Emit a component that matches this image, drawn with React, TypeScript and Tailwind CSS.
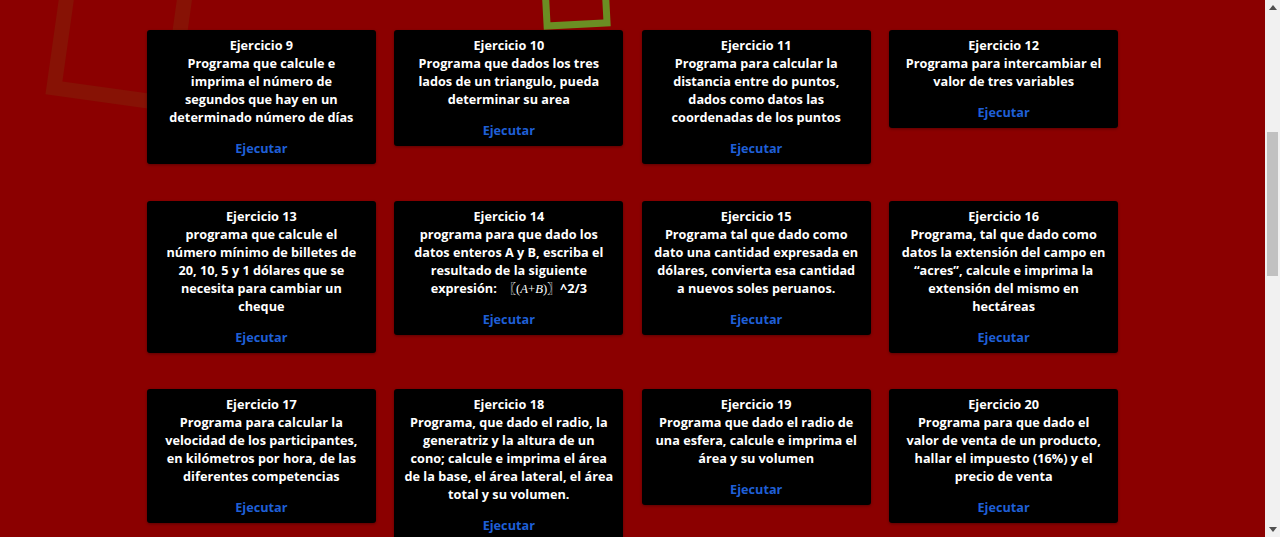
import React from "react";

type Card = { n: number; lines: React.ReactNode[] };

const Expr = () => (
  <span>
    expresión:{"\u00A0\u00A0"}
    <span style={{ fontFamily: '"Noto Sans CJK SC", sans-serif' }} className="font-bold">〖</span>
    <span className="font-normal" style={{ fontFamily: '"Liberation Serif", serif' }}>
      (<i>A</i>+<i>B</i>)
    </span>
    <span style={{ fontFamily: '"Noto Sans CJK SC", sans-serif' }} className="font-bold">〗</span>^2/3
  </span>
);

const cards: Card[] = [
  { n: 9, lines: ["Programa que calcule e", "imprima el número de", "segundos que hay en un", "determinado número de días"] },
  { n: 10, lines: ["Programa que dados los tres", "lados de un triangulo, pueda", "determinar su area"] },
  { n: 11, lines: ["Programa para calcular la", "distancia entre do puntos,", "dados como datos las", "coordenadas de los puntos"] },
  { n: 12, lines: ["Programa para intercambiar el", "valor de tres variables"] },
  { n: 13, lines: ["programa que calcule el", "número mínimo de billetes de", "20, 10, 5 y 1 dólares que se", "necesita para cambiar un", "cheque"] },
  { n: 14, lines: ["programa para que dado los", "datos enteros A y B, escriba el", "resultado de la siguiente", <Expr key="e" />] },
  { n: 15, lines: ["Programa tal que dado como", "dato una cantidad expresada en", "dólares, convierta esa cantidad", "a nuevos soles peruanos."] },
  { n: 16, lines: ["Programa, tal que dado como", "datos la extensión del campo en", "“acres”, calcule e imprima la", "extensión del mismo en", "hectáreas"] },
  { n: 17, lines: ["Programa para calcular la", "velocidad de los participantes,", "en kilómetros por hora, de las", "diferentes competencias"] },
  { n: 18, lines: ["Programa, que dado el radio, la", "generatriz y la altura de un", "cono; calcule e imprima el área", "de la base, el área lateral, el área", "total y su volumen."] },
  { n: 19, lines: ["Programa que dado el radio de", "una esfera, calcule e imprima el", "área y su volumen"] },
  { n: 20, lines: ["Programa para que dado el", "valor de venta de un producto,", "hallar el impuesto (16%) y el", "precio de venta"] },
];

function CardView({ c }: { c: Card }) {
  return (
    <div className="flex flex-col items-center rounded-[3px] bg-black pt-[6px] pb-[7px] text-center text-[12.7px] font-bold leading-[18px] text-white shadow-[0_1px_3px_rgba(0,0,0,0.35)]">
      <div className="h-[18px] whitespace-nowrap">Ejercicio {c.n}</div>
      {c.lines.map((l, i) => (
        <div key={i} className="h-[18px] whitespace-nowrap">
          {l}
        </div>
      ))}
      <a className="mt-[13px] block h-[18px] cursor-pointer whitespace-nowrap font-bold text-[#1f5fd6]">Ejecutar</a>
    </div>
  );
}

function Arrow({ up }: { up?: boolean }) {
  return (
    <div className="flex h-[15px] items-center justify-center">
      <svg width="8" height="5" viewBox="0 0 8 5">
        {up ? <polygon points="4,0 8,5 0,5" fill="#505050" /> : <polygon points="0,0 8,0 4,5" fill="#505050" />}
      </svg>
    </div>
  );
}

export default function App() {
  return (
    <div
      className="flex h-[537px] w-full overflow-hidden"
      style={{ fontFamily: '"Open Sans", "Noto Sans", sans-serif' }}
    >
      <div className="relative flex-1 overflow-hidden bg-[#8b0000]">
        <div className="pointer-events-none absolute left-[54px] top-[-28px] h-[132px] w-[132px] rotate-[8deg] border-[15px] border-[rgba(107,142,35,0.13)]" />
        <div className="pointer-events-none absolute left-[542px] top-[-39px] h-[67px] w-[67px] -rotate-[3deg] border-[7px] border-[#6b8e23]" />
        <div className="relative z-10 mx-auto grid w-[971px] grid-cols-4 items-start gap-x-[18.67px] gap-y-[36.6px] pt-[30px]">
          {cards.map((c) => (
            <CardView key={c.n} c={c} />
          ))}
        </div>
      </div>
      <div className="flex w-[15px] flex-col bg-[#f1f1f1]">
        <Arrow up />
        <div className="h-[117px]" />
        <div className="mx-[2px] h-[144px] bg-[#c1c1c1]" />
        <div className="flex-1" />
        <Arrow />
      </div>
    </div>
  );
}
